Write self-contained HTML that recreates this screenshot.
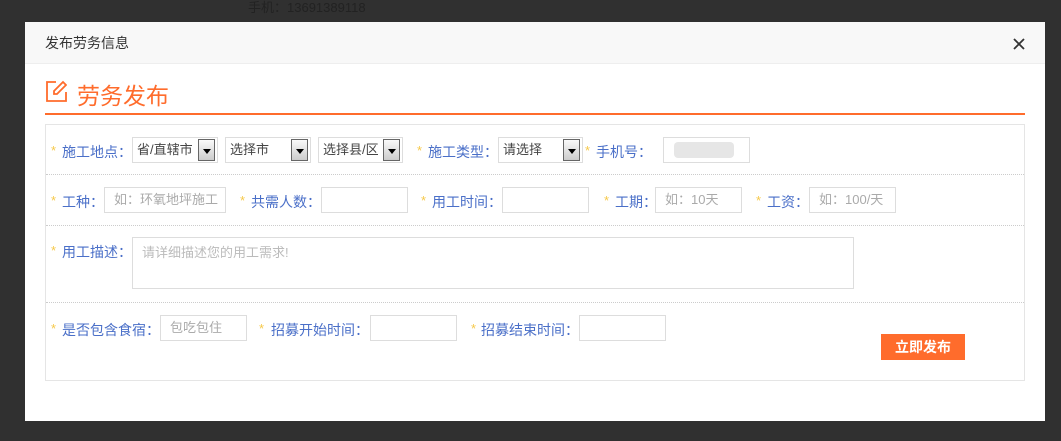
<!DOCTYPE html>
<html><head><meta charset="utf-8"><style>
*{margin:0;padding:0;box-sizing:border-box}
body{width:1061px;height:441px;background:#303030;position:relative;overflow:hidden;font-family:"Liberation Sans","Noto Sans CJK SC",sans-serif;font-size:14px}
.a{position:absolute}
.modal{left:25px;top:22px;width:1020px;height:399px;background:#fff}
.hd{left:25px;top:22px;width:1020px;height:42px;background:#f8f8f8;border-bottom:1px solid #eee;font-size:14px;color:#333;line-height:42px;padding-left:20px}
.st{color:#f6c94a;font-size:13px}
.lb{color:#4a6fc8;font-size:14px;white-space:nowrap}
.in{border:1px solid #ddd;background:#fff;color:#aaa;font-size:13px;padding-left:9px;white-space:nowrap}
.sel{border:1px solid #ddd;background:#fff;color:#444;font-size:13px;padding-left:4px;height:26px;line-height:24px}
.sel i{position:absolute;right:2px;top:1px;width:17px;height:22px;border:1px solid #666;background:linear-gradient(#fafafa,#ccc)}
.sel i:after{content:"";position:absolute;left:4px;top:9px;border-left:4px solid transparent;border-right:4px solid transparent;border-top:5px solid #000}
.dot{left:46px;width:978px;border-top:1px dotted #ccc}
</style></head><body>
<div class="a" style="left:248px;top:-3px;color:#222;font-size:13px">手机：13691389118</div>
<div class="a modal"></div>
<div class="a hd">发布劳务信息</div>
<svg class="a" style="left:1012px;top:37px" width="14" height="14"><path d="M2 2L12 12M12 2L2 12" stroke="#333" stroke-width="1.8"/></svg>
<svg class="a" style="left:45px;top:80px" width="22" height="22" fill="none" stroke="#ff6c2c" stroke-width="1.8"><path d="M11 2H2v19h19v-9"/><path d="M18 2l3 3-9 9H9v-3z"/></svg>
<div class="a" style="left:77px;top:77px;color:#ff6c2c;font-size:23px">劳务发布</div>
<div class="a" style="left:45px;top:113px;width:980px;height:2px;background:#ff6c2c"></div>
<div class="a" style="left:45px;top:124px;width:980px;height:257px;border:1px solid #e5e5e5"></div>
<div class="a dot" style="top:174px"></div>
<div class="a dot" style="top:225px"></div>
<div class="a dot" style="top:302px"></div>

<div class="a st" style="left:51px;top:143px">*</div><div class="a lb" style="left:62px;top:142px">施工地点：</div>
<div class="a sel" style="left:132px;top:137px;width:86px">省/直辖市<i></i></div>
<div class="a sel" style="left:225px;top:137px;width:86px">选择市<i></i></div>
<div class="a sel" style="left:318px;top:137px;width:85px">选择县/区<i></i></div>
<div class="a st" style="left:417px;top:143px">*</div><div class="a lb" style="left:428px;top:142px">施工类型：</div>
<div class="a sel" style="left:498px;top:137px;width:85px">请选择<i></i></div>
<div class="a st" style="left:585px;top:143px">*</div><div class="a lb" style="left:596px;top:142px">手机号：</div>
<div class="a in" style="left:663px;top:137px;width:87px;height:26px"><div class="a" style="left:10px;top:4px;width:60px;height:16px;background:#e6e6e6;border-radius:4px"></div></div>

<div class="a st" style="left:51px;top:193px">*</div><div class="a lb" style="left:62px;top:192px">工种：</div>
<div class="a in" style="left:104px;top:187px;width:122px;height:26px;line-height:24px">如：环氧地坪施工</div>
<div class="a st" style="left:240px;top:193px">*</div><div class="a lb" style="left:251px;top:192px">共需人数：</div>
<div class="a in" style="left:321px;top:187px;width:87px;height:26px"></div>
<div class="a st" style="left:421px;top:193px">*</div><div class="a lb" style="left:432px;top:192px">用工时间：</div>
<div class="a in" style="left:502px;top:187px;width:87px;height:26px"></div>
<div class="a st" style="left:604px;top:193px">*</div><div class="a lb" style="left:615px;top:192px">工期：</div>
<div class="a in" style="left:655px;top:187px;width:87px;height:26px;line-height:24px">如：10天</div>
<div class="a st" style="left:756px;top:193px">*</div><div class="a lb" style="left:767px;top:192px">工资：</div>
<div class="a in" style="left:809px;top:187px;width:87px;height:26px;line-height:24px">如：100/天</div>

<div class="a st" style="left:51px;top:243px">*</div><div class="a lb" style="left:62px;top:242px">用工描述：</div>
<div class="a in" style="left:132px;top:237px;width:722px;height:52px;padding-top:4px;color:#bbb">请详细描述您的用工需求!</div>

<div class="a st" style="left:51px;top:321px">*</div><div class="a lb" style="left:62px;top:320px">是否包含食宿：</div>
<div class="a in" style="left:160px;top:315px;width:87px;height:26px;line-height:24px">包吃包住</div>
<div class="a st" style="left:259px;top:321px">*</div><div class="a lb" style="left:271px;top:320px">招募开始时间：</div>
<div class="a in" style="left:370px;top:315px;width:87px;height:26px"></div>
<div class="a st" style="left:471px;top:321px">*</div><div class="a lb" style="left:481px;top:320px">招募结束时间：</div>
<div class="a in" style="left:579px;top:315px;width:87px;height:26px"></div>
<div class="a" style="left:881px;top:334px;width:84px;height:26px;background:#ff6c2c;color:#fff;font-size:14px;font-weight:bold;text-align:center;line-height:26px">立即发布</div>
</body></html>
